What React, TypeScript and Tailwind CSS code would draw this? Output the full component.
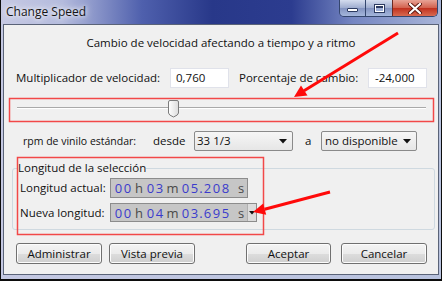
import React from "react";

function Caret({ className = "" }: { className?: string }) {
  return (
    <svg width="8" height="5" viewBox="0 0 8 5" className={className}>
      <path d="M0 0 H8 L4 4.5 Z" fill="#111" />
    </svg>
  );
}

function Select({ w, text, pl }: { w: string; text: string; pl: string }) {
  return (
    <div
      className={`${w} h-[20px] flex items-center justify-between border border-[#8a8a8a] rounded-[2px] bg-[linear-gradient(#f6f6f6,#e6e6e6)] ${pl} pr-[5px]`}
    >
      <span>{text}</span>
      <Caret />
    </div>
  );
}

function Digit({ c }: { c: string }) {
  return <span className="w-[9px] text-center text-[#3b3bcc]">{c}</span>;
}

function TimeBox({ parts, dropdown }: { parts: [string, string, string, string]; dropdown?: boolean }) {
  const [h, m, s1, s2] = parts;
  return (
    <div className="h-full flex border border-[#8c8c8c] bg-[#c6c6c6] text-[13px] leading-[16px]">
      <div className="w-[136px] flex items-center pl-[3px]">
        <Digit c={h[0]} />
        <Digit c={h[1]} />
        <span className="w-[14px] text-center text-[#4a4a4a]">h</span>
        <Digit c={m[0]} />
        <Digit c={m[1]} />
        <span className="w-[17px] text-center text-[#4a4a4a]">m</span>
        <Digit c={s1[0]} />
        <Digit c={s1[1]} />
        <span className="w-[4px] text-center text-[#3b3bcc]">.</span>
        <Digit c={s2[0]} />
        <Digit c={s2[1]} />
        <Digit c={s2[2]} />
        <span className="ml-[8px] text-[#4a4a4a]">s</span>
      </div>
      {dropdown && (
        <div className="w-[9px] flex items-center justify-center bg-[#dcdcdc] border-l border-[#b0b0b0]">
          <svg width="6" height="4" viewBox="0 0 6 4">
            <path d="M0 0 H6 L3 3.5 Z" fill="#111" />
          </svg>
        </div>
      )}
    </div>
  );
}

function Button({ w, children }: { w: string; children: React.ReactNode }) {
  return (
    <div
      className={`${w} h-[21px] flex items-center justify-center border border-[#707070] rounded-[3px] bg-[linear-gradient(#f4f4f4_0%,#ebebeb_50%,#dddddd_51%,#cfcfcf_100%)] shadow-[inset_0_0_0_1px_#fcfcfc]`}
    >
      {children}
    </div>
  );
}

export default function App() {
  return (
    <div className="relative w-[442px] h-[281px] bg-[#0c0c0c] px-[1px] pb-[2px] flex flex-col font-['Open_Sans','Noto_Sans',sans-serif] text-[11.5px] leading-[16px] text-[#111] overflow-hidden">
      <div className="flex-1 flex flex-col bg-[linear-gradient(90deg,#c4c8e2,#b8c2de)]">
        {/* Title bar */}
        <div className="h-[24px] flex items-start justify-between bg-[linear-gradient(90deg,#c6c9e3_0%,#b4bbdd_14%,#4f60ad_32%,#283889_48%,#2c3c8f_66%,#7586c2_80%,#a9b5d8_100%)]">
          <span className="pl-[5px] pt-[4px] text-[12px] leading-[16px] text-[#151515] [text-shadow:0_0_4px_#ffffff,0_0_8px_#ffffff]">
            Change Speed
          </span>
          <div className="flex mr-[3px] border border-t-0 border-[#34466e] rounded-b-[5px] overflow-hidden">
            <div className="w-[25px] h-[16px] flex items-center justify-center bg-[linear-gradient(#d4dcee,#9eaccf_50%,#8393c0_51%,#a4b6dc)]">
              <div className="w-[11px] h-[4px] mt-[3px] bg-white border border-[#2c3a60] rounded-[1px]" />
            </div>
            <div className="w-[27px] h-[16px] flex items-center justify-center border-l border-[#34466e] bg-[linear-gradient(#d4dcee,#9eaccf_50%,#8393c0_51%,#a4b6dc)]">
              <div className="w-[11px] h-[9px] border-[1px] border-[#2c3a60] bg-white p-[1px]">
                <div className="w-full h-full border-t-[2px] border-[#2c3a60] bg-[#9fb0d8]" />
              </div>
            </div>
            <div className="w-[45px] h-[16px] flex items-center justify-center border-l border-[#6b2a22] bg-[linear-gradient(#e8a496,#d2604c_50%,#c0301e_51%,#d86a50)]">
              <svg width="14" height="11" viewBox="0 0 14 11">
                <path d="M2 1 L12 10 M12 1 L2 10" stroke="#5a1810" strokeWidth="4" strokeLinecap="round" />
                <path d="M2 1 L12 10 M12 1 L2 10" stroke="#ffffff" strokeWidth="2.2" strokeLinecap="round" />
              </svg>
            </div>
          </div>
        </div>

        {/* Client area */}
        <div className="flex-1 mx-[2px] mb-[4px] border border-[#5a6378] bg-[#f0f0f0] flex flex-col">
          <div className="pt-[10px] text-center">Cambio de velocidad afectando a tiempo y a ritmo</div>

          <div className="mt-[17px] h-[20px] flex items-center pl-[12px]">
            <span className="w-[154px]">Multiplicador de velocidad:</span>
            <div className="w-[59px] h-[20px] flex items-center bg-white border border-[#e0e2ea] pl-[5px]">0,760</div>
            <span className="w-[139px] pl-[10px]">Porcentaje de cambio:</span>
            <div className="w-[59px] h-[20px] flex items-center bg-white border border-[#e0e2ea] pl-[6px]">-24,000</div>
          </div>

          <div className="relative ml-[5px] w-[424px] h-[23px] mt-[10px] pt-[9px] pl-[8px]">
            <div className="w-[409px] h-[2px] bg-[#a9a9a9] border-b border-white" />
            <svg className="absolute left-[159px] top-[2px]" width="11" height="18" viewBox="0 0 11 18">
              <defs>
                <linearGradient id="tg" x1="0" y1="0" x2="1" y2="0">
                  <stop offset="0" stopColor="#ffffff" />
                  <stop offset="1" stopColor="#dcdcdc" />
                </linearGradient>
              </defs>
              <path
                d="M0.5 2 Q0.5 0.5 2 0.5 H9 Q10.5 0.5 10.5 2 V13 Q10.5 15 5.5 17 Q0.5 15 0.5 13 Z"
                fill="url(#tg)"
                stroke="#7c7c7c"
              />
            </svg>
          </div>

          <div className="mt-[10px] h-[20px] flex items-center pl-[19px]">
            <span className="w-[130px] text-[10.5px]">rpm de vinilo estándar:</span>
            <span className="w-[41px]">desde</span>
            <Select w="w-[99px]" text="33 1/3" pl="pl-[2px]" />
            <span className="w-[28px] pl-[12px]">a</span>
            <Select w="w-[96px]" text="no disponible" pl="pl-[3px]" />
          </div>

          <fieldset className="mt-[9px] ml-[8px] mr-[3px] border border-[#cfd9e0] rounded-[3px] pl-[5px] pr-[5px] pb-[7px]">
            <legend className="px-0 leading-[16px]">Longitud de la selección</legend>
            <div className="mt-[2px] h-[20px] flex items-center pl-[2px]">
              <span className="w-[90px]">Longitud actual:</span>
              <TimeBox parts={["00", "03", "05", "208"]} />
            </div>
            <div className="mt-[5px] h-[19px] flex items-center pl-[2px]">
              <span className="w-[90px]">Nueva longitud:</span>
              <TimeBox parts={["00", "04", "03", "695"]} dropdown />
            </div>
          </fieldset>

          <div className="mt-[13px] flex items-center pl-[12px]">
            <Button w="w-[86px]">Administrar</Button>
            <div className="ml-[7px]">
              <Button w="w-[86px]">Vista previa</Button>
            </div>
            <div className="ml-[51px]">
              <Button w="w-[85px]">Aceptar</Button>
            </div>
            <div className="ml-[10px]">
              <Button w="w-[86px]">Cancelar</Button>
            </div>
          </div>
        </div>
      </div>

      {/* Annotations */}
      <svg className="absolute left-0 top-0 pointer-events-none" width="442" height="281" viewBox="0 0 442 281">
        <rect x="9.5" y="98.5" width="424" height="23" fill="none" stroke="#f24848" strokeWidth="1.5" />
        <rect x="17.5" y="157.5" width="246" height="77" fill="none" stroke="#f24848" strokeWidth="1.5" />
        <line x1="398" y1="33" x2="304" y2="90.7" stroke="#ff0a0a" strokeWidth="3" />
        <polygon points="294,97 307.5,95.5 301,85.5" fill="#ff0a0a" />
        <line x1="330" y1="192" x2="264.6" y2="209.2" stroke="#ff0a0a" strokeWidth="3" />
        <polygon points="253,212 266.2,214.8 263.2,203.6" fill="#ff0a0a" />
      </svg>
    </div>
  );
}
